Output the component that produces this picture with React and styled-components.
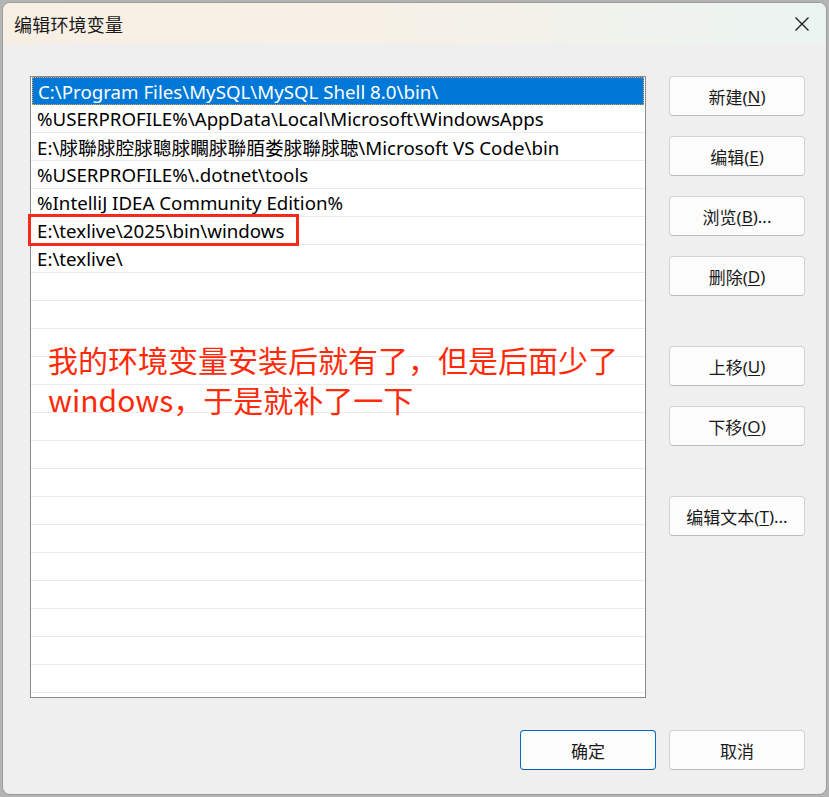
import styled, { createGlobalStyle } from "styled-components";

const GlobalStyle = createGlobalStyle`
  html, body {
    margin: 0;
    padding: 0;
    background: #b4b4b4;
  }
  * {
    box-sizing: border-box;
  }
`;

const FONT = `"Noto Sans", "Noto Sans CJK SC", sans-serif`;

const paths = [
  "C:\\Program Files\\MySQL\\MySQL Shell 8.0\\bin\\",
  "%USERPROFILE%\\AppData\\Local\\Microsoft\\WindowsApps",
  "E:\\脙聯脙腔脙聰脙矙脙聯脜娄脙聯脙聴\\Microsoft VS Code\\bin",
  "%USERPROFILE%\\.dotnet\\tools",
  "%IntelliJ IDEA Community Edition%",
  "E:\\texlive\\2025\\bin\\windows",
  "E:\\texlive\\",
];

const TOTAL_ROWS = 23;

const Page = styled.div`
  width: 829px;
  height: 797px;
  padding: 2px;
  font-family: ${FONT};
`;

const Dialog = styled.div`
  width: 825px;
  height: 793px;
  border: 1px solid #9c9c9c;
  border-radius: 8px;
  overflow: hidden;
  background: #efefef;
  display: flex;
  flex-direction: column;
`;

const TitleBar = styled.div`
  height: 41px;
  flex-shrink: 0;
  display: flex;
  align-items: center;
  justify-content: space-between;
  padding: 0 16px 0 11px;
  background: linear-gradient(90deg, #f8efe3 0%, #f6f0e6 45%, #ebf4f2 100%);
`;

const Title = styled.div`
  font-size: 18px;
  color: #1a1a1a;
  letter-spacing: 0.2px;
  margin-top: 1px;
`;

const CloseIcon = styled.svg`
  width: 16px;
  height: 16px;
`;

const Body = styled.div`
  flex: 1;
  display: flex;
  flex-direction: column;
  padding: 32px 21px 0 27px;
`;

const Main = styled.div`
  display: flex;
  gap: 23px;
`;

const ListFrame = styled.div`
  position: relative;
  width: 616px;
  height: 622px;
  border: 1px solid #858990;
  background: #ffffff;
`;

const Viewport = styled.div`
  height: 100%;
  overflow: hidden;
`;

const Row = styled.div`
  height: 28px;
  display: flex;
  align-items: center;
  padding-left: ${(p) => (p.$selected ? "5px" : "6px")};
  margin: ${(p) => (p.$selected ? "0 1px 0 1px" : "0")};
  font-size: 18.7px;
  white-space: nowrap;
  color: ${(p) => (p.$selected ? "#ffffff" : "#000000")};
  background: ${(p) => (p.$selected ? "#0078d7" : "transparent")};
  border: ${(p) => (p.$selected ? "1px dotted #f2a04a" : "none")};
  border-bottom: ${(p) =>
    p.$selected ? "1px dotted #f2a04a" : "1px solid #ebebeb"};
`;

const Highlight = styled.div`
  position: absolute;
  left: -3px;
  top: 137px;
  width: 271px;
  height: 32px;
  border: 3px solid #f52a1c;
  pointer-events: none;
`;

const Note = styled.div`
  position: absolute;
  left: 17px;
  top: 262px;
  font-family: "Noto Sans CJK SC", sans-serif;
  font-size: 30px;
  line-height: 40px;
  color: #ff2a0a;
  white-space: nowrap;
`;

const ButtonColumn = styled.div`
  display: flex;
  flex-direction: column;
`;

const Button = styled.button`
  width: 136px;
  height: 40px;
  margin-top: ${(p) => p.$gap || 0}px;
  border: 1px solid ${(p) => (p.$primary ? "#0a67c2" : "#d2d2d2")};
  border-bottom-color: ${(p) => (p.$primary ? "#0a5fb4" : "#bdbdbd")};
  border-radius: 4px;
  background: #fcfcfc;
  font-family: ${FONT};
  font-size: 17px;
  color: #1a1a1a;
  padding: 0;
  display: flex;
  align-items: center;
  justify-content: center;
  u {
    text-underline-offset: 2px;
  }
`;

const Footer = styled.div`
  display: flex;
  justify-content: flex-end;
  gap: 13px;
  margin-top: 32px;
`;

const sideButtons = [
  { label: "新建", key: "N", gap: 0 },
  { label: "编辑", key: "E", gap: 20 },
  { label: "浏览", key: "B", gap: 20, dots: true },
  { label: "删除", key: "D", gap: 20 },
  { label: "上移", key: "U", gap: 50 },
  { label: "下移", key: "O", gap: 20 },
  { label: "编辑文本", key: "T", gap: 50, dots: true },
];

export default function App() {
  const rows = Array.from({ length: TOTAL_ROWS }, (_, i) => paths[i] || "");

  return (
    <>
      <GlobalStyle />
      <Page>
        <Dialog>
          <TitleBar>
            <Title>编辑环境变量</Title>
            <CloseIcon viewBox="0 0 16 16">
              <path
                d="M1.5 1.5 L14.5 14.5 M14.5 1.5 L1.5 14.5"
                stroke="#1c1c1c"
                strokeWidth="1.3"
                fill="none"
              />
            </CloseIcon>
          </TitleBar>
          <Body>
            <Main>
              <ListFrame>
                <Viewport>
                  {rows.map((text, i) => (
                    <Row key={i} $selected={i === 0}>
                      {text}
                    </Row>
                  ))}
                </Viewport>
                <Highlight />
                <Note>
                  我的环境变量安装后就有了，但是后面少了
                  <br />
                  windows，于是就补了一下
                </Note>
              </ListFrame>
              <ButtonColumn>
                {sideButtons.map((b) => (
                  <Button key={b.key} $gap={b.gap}>
                    {b.label}(<u>{b.key}</u>){b.dots ? "..." : ""}
                  </Button>
                ))}
              </ButtonColumn>
            </Main>
            <Footer>
              <Button $primary>确定</Button>
              <Button>取消</Button>
            </Footer>
          </Body>
        </Dialog>
      </Page>
    </>
  );
}
